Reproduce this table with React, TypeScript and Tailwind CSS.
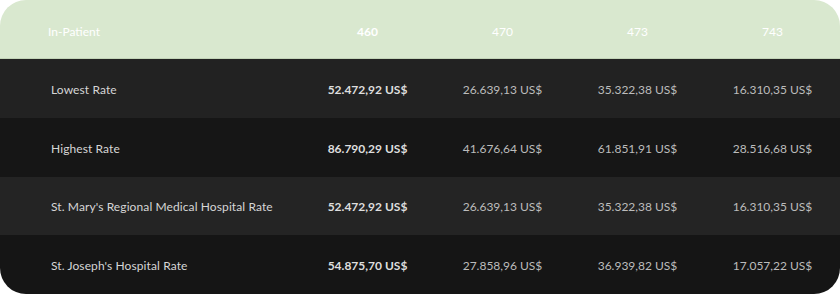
import React from "react";

interface RateRow {
  label: string;
  values: string[];
  bg: string;
}

const columns = ["460", "470", "473", "743"];

const rows: RateRow[] = [
  { label: "Lowest Rate", values: ["52.472,92 US$", "26.639,13 US$", "35.322,38 US$", "16.310,35 US$"], bg: "bg-[#222222]" },
  { label: "Highest Rate", values: ["86.790,29 US$", "41.676,64 US$", "61.851,91 US$", "28.516,68 US$"], bg: "bg-[#161616]" },
  { label: "St. Mary's Regional Medical Hospital Rate", values: ["52.472,92 US$", "26.639,13 US$", "35.322,38 US$", "16.310,35 US$"], bg: "bg-[#242424]" },
  { label: "St. Joseph's Hospital Rate", values: ["54.875,70 US$", "27.858,96 US$", "36.939,82 US$", "17.057,22 US$"], bg: "bg-[#151515]" },
];

const App = () => {
  return (
    <div className="w-[840px] h-[294px] bg-white font-['Lato','Liberation_Sans',sans-serif] text-[12px]">
      <div className="h-full rounded-[26px] overflow-hidden flex flex-col">
        {/* Header */}
        <div className="grid grid-cols-[300px_repeat(4,1fr)] h-[59px] shrink-0 items-center bg-[#d9e8cf] border-b border-[#c3d4b8] text-white pt-[6px]">
          <div className="pl-[48px]">In-Patient</div>
          {columns.map((c, i) => (
            <div key={c} className={`text-center ${i === 0 ? "font-bold" : ""}`}>
              {c}
            </div>
          ))}
        </div>

        {/* Rows */}
        {rows.map((row) => (
          <div
            key={row.label}
            className={`grid grid-cols-[300px_repeat(4,1fr)] flex-1 items-center pt-[3px] ${row.bg}`}
          >
            <div className="pl-[51px] text-[#d6d6d6] tracking-[0.1px]">{row.label}</div>
            {row.values.map((v, i) => (
              <div
                key={i}
                className={`text-center ${i === 0 ? "font-bold text-[#dedede]" : "text-[#bcbcbc]"}`}
              >
                {v}
              </div>
            ))}
          </div>
        ))}
      </div>
    </div>
  );
};

export default App;
